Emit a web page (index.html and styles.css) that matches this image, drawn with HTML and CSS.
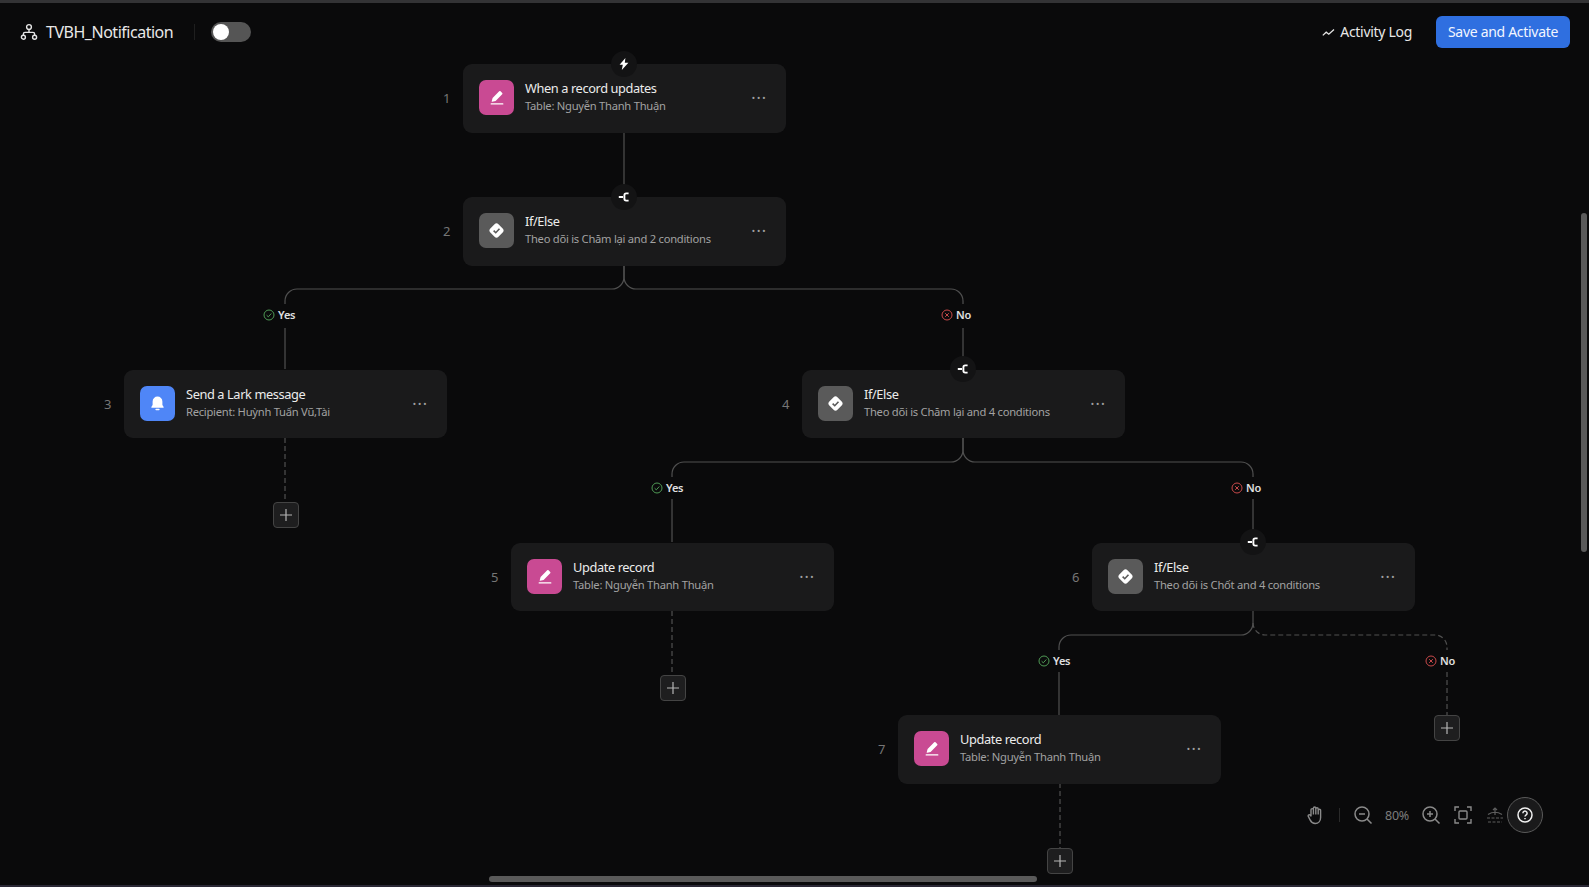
FILE: index.html
```html
<!DOCTYPE html>
<html lang="en">
<head>
    <meta charset="UTF-8">
    <meta name="viewport" content="width=device-width, initial-scale=1.0">
    <title>TVBH_Notification</title>
    <link rel="stylesheet" href="styles.css">
</head>
<body>
    <!-- Icon sprite -->
    <svg class="sprite" width="0" height="0">
        <symbol id="i-pen" viewBox="0 0 16 16">
            <path d="M10.2 1.9a1 1 0 0 1 1.4 0l1.6 1.6a1 1 0 0 1 0 1.4l-6.6 6.6-3.4.9a.4.4 0 0 1-.5-.5l.9-3.4z" fill="#fff" transform="translate(0 -.6)"/>
            <rect x="1.6" y="13.2" width="12.8" height="1.3" rx=".6" fill="#fff"/>
        </symbol>
        <symbol id="i-check" viewBox="0 0 16 16">
            <rect x="2.6" y="2.6" width="10.8" height="10.8" rx="2.6" fill="#fff" transform="rotate(45 8 8)"/>
            <path d="M5.3 8.1l2 2 3.5-3.7" fill="none" stroke="#5a5a5a" stroke-width="1.5"/>
        </symbol>
        <symbol id="i-bell" viewBox="0 0 16 16">
            <path d="M8 1.5a4.6 4.6 0 0 0-4.6 4.6v3.2L2.2 11.4a.5.5 0 0 0 .4.7h10.8a.5.5 0 0 0 .4-.7l-1.2-2.1V6.1A4.6 4.6 0 0 0 8 1.5z" fill="#fff"/>
            <rect x="6" y="13" width="4" height="1.4" rx=".7" fill="#fff"/>
        </symbol>
        <symbol id="i-bolt" viewBox="0 0 12 12">
            <path d="M7.4 0L1.6 6.8h3.2L3.8 12 10.4 4.8H6.800z" fill="#fff"/>
        </symbol>
        <symbol id="i-branch" viewBox="0 0 12 12">
            <path d="M.8 6H5M10.6 2.4H8.2Q6.4 2.4 6.4 4.2V7.8Q6.4 9.6 8.2 9.6H10.6" fill="none" stroke="#fff" stroke-width="1.9"/>
        </symbol>
        <symbol id="i-yes" viewBox="0 0 12 12">
            <circle cx="6" cy="6" r="5" fill="none" stroke="#4f9a55" stroke-width="1"/>
            <path d="M3.6 6.2l1.7 1.6 3-3.3" fill="none" stroke="#4f9a55" stroke-width="1"/>
        </symbol>
        <symbol id="i-no" viewBox="0 0 12 12">
            <circle cx="6" cy="6" r="5" fill="none" stroke="#c8494a" stroke-width="1"/>
            <path d="M4.2 4.2l3.6 3.6M7.8 4.2l-3.6 3.6" fill="none" stroke="#c8494a" stroke-width="1"/>
        </symbol>
        <symbol id="i-plus" viewBox="0 0 14 14">
            <path d="M7 1v12M1 7h12" fill="none" stroke="#b5b5b5" stroke-width="1.2"/>
        </symbol>
    </svg>

    <!-- Header -->
    <header class="topbar">
        <div class="flow-info">
            <svg class="flow-icon" width="18" height="18" viewBox="0 0 18 18" fill="none" stroke="#e6e6e6" stroke-width="1.4">
                <circle cx="9" cy="4" r="2.4"/>
                <circle cx="3.4" cy="14.2" r="2"/>
                <circle cx="14.6" cy="14.2" r="2"/>
                <path d="M3.4 12.2V11a1.6 1.6 0 0 1 1.6-1.6h8a1.6 1.6 0 0 1 1.6 1.6v1.2M9 6.4v3"/>
            </svg>
            <span class="flow-name">TVBH_Notification</span>
            <span class="divider"></span>
            <span class="toggle"><span class="toggle-knob"></span></span>
        </div>
        <div class="top-actions">
            <span class="activity">
                <svg width="13" height="13" viewBox="0 0 13 13" fill="none" stroke="#e6e6e6" stroke-width="1.3">
                    <path d="M.8 9.4l3.4-3.2 2.6 2 5.2-4.6"/>
                </svg>
                Activity Log
            </span>
            <button class="save-btn">Save and Activate</button>
        </div>
    </header>

    <!-- Flow canvas -->
    <main class="canvas">
        <svg class="wires" width="1589" height="887" fill="none" stroke="#505050" stroke-width="1.2">
            <path d="M624 133V197"/>
            <path d="M624 265V277a12 12 0 0 1-12 12H297a12 12 0 0 0-12 12v3"/>
            <path d="M624 265V277a12 12 0 0 0 12 12H951a12 12 0 0 1 12 12v3"/>
            <path d="M285 328V369M963 328V369"/>
            <path d="M963 438V450a12 12 0 0 1-12 12H684a12 12 0 0 0-12 12v3"/>
            <path d="M963 438V450a12 12 0 0 0 12 12H1241a12 12 0 0 1 12 12v3"/>
            <path d="M672 499V542M1253 499V543"/>
            <path d="M1253 611V623a12 12 0 0 1-12 12H1071a12 12 0 0 0-12 12v3"/>
            <path d="M1059 672V715"/>
            <g stroke-dasharray="5 3">
                <path d="M1253 623a12 12 0 0 0 12 12H1435a12 12 0 0 1 12 12v3"/>
                <path d="M1447 672V715M285 438V502M672 611V675M1060 783V848"/>
            </g>
        </svg>

        <div class="node node-1">
            <span class="step">1</span>
            <span class="node-icon pink"><svg width="16" height="16"><use href="#i-pen"/></svg></span>
            <div class="node-text">
                <div class="node-title">When a record updates</div>
                <div class="node-sub">Table: Nguyễn Thanh Thuận</div>
            </div>
            <span class="more">···</span>
            <span class="port"><svg width="12" height="12"><use href="#i-bolt"/></svg></span>
        </div>

        <div class="node node-2">
            <span class="step">2</span>
            <span class="node-icon gray"><svg width="17" height="17"><use href="#i-check"/></svg></span>
            <div class="node-text">
                <div class="node-title">If/Else</div>
                <div class="node-sub">Theo dõi is Chăm lại and 2 conditions</div>
            </div>
            <span class="more">···</span>
            <span class="port"><svg width="12" height="12"><use href="#i-branch"/></svg></span>
        </div>

        <div class="node node-3">
            <span class="step">3</span>
            <span class="node-icon blue"><svg width="17" height="17"><use href="#i-bell"/></svg></span>
            <div class="node-text">
                <div class="node-title">Send a Lark message</div>
                <div class="node-sub">Recipient: Huỳnh Tuấn Vũ,Tài</div>
            </div>
            <span class="more">···</span>
        </div>

        <div class="node node-4">
            <span class="step">4</span>
            <span class="node-icon gray"><svg width="17" height="17"><use href="#i-check"/></svg></span>
            <div class="node-text">
                <div class="node-title">If/Else</div>
                <div class="node-sub">Theo dõi is Chăm lại and 4 conditions</div>
            </div>
            <span class="more">···</span>
            <span class="port"><svg width="12" height="12"><use href="#i-branch"/></svg></span>
        </div>

        <div class="node node-5">
            <span class="step">5</span>
            <span class="node-icon pink"><svg width="16" height="16"><use href="#i-pen"/></svg></span>
            <div class="node-text">
                <div class="node-title">Update record</div>
                <div class="node-sub">Table: Nguyễn Thanh Thuận</div>
            </div>
            <span class="more">···</span>
        </div>

        <div class="node node-6">
            <span class="step">6</span>
            <span class="node-icon gray"><svg width="17" height="17"><use href="#i-check"/></svg></span>
            <div class="node-text">
                <div class="node-title">If/Else</div>
                <div class="node-sub">Theo dõi is Chốt and 4 conditions</div>
            </div>
            <span class="more">···</span>
            <span class="port"><svg width="12" height="12"><use href="#i-branch"/></svg></span>
        </div>

        <div class="node node-7">
            <span class="step">7</span>
            <span class="node-icon pink"><svg width="16" height="16"><use href="#i-pen"/></svg></span>
            <div class="node-text">
                <div class="node-title">Update record</div>
                <div class="node-sub">Table: Nguyễn Thanh Thuận</div>
            </div>
            <span class="more">···</span>
        </div>

        <!-- Branch labels -->
        <span class="branch yes-1"><svg width="12" height="12"><use href="#i-yes"/></svg>Yes</span>
        <span class="branch no-1"><svg width="12" height="12"><use href="#i-no"/></svg>No</span>
        <span class="branch yes-2"><svg width="12" height="12"><use href="#i-yes"/></svg>Yes</span>
        <span class="branch no-2"><svg width="12" height="12"><use href="#i-no"/></svg>No</span>
        <span class="branch yes-3"><svg width="12" height="12"><use href="#i-yes"/></svg>Yes</span>
        <span class="branch no-3"><svg width="12" height="12"><use href="#i-no"/></svg>No</span>

        <!-- Add buttons -->
        <span class="add add-1"><svg width="14" height="14"><use href="#i-plus"/></svg></span>
        <span class="add add-2"><svg width="14" height="14"><use href="#i-plus"/></svg></span>
        <span class="add add-3"><svg width="14" height="14"><use href="#i-plus"/></svg></span>
        <span class="add add-4"><svg width="14" height="14"><use href="#i-plus"/></svg></span>
    </main>

    <!-- Zoom tools -->
    <div class="tools">
        <svg class="tool" width="20" height="20" viewBox="0 0 20 20" fill="none" stroke="#8a8a8a" stroke-width="1.4" stroke-linejoin="round">
            <path d="M5 11V4.8a1.2 1.2 0 0 1 2.4 0V3.2a1.2 1.2 0 0 1 2.4 0v.8a1.2 1.2 0 0 1 2.4 0v1.400a1.2 1.2 0 0 1 2.4 0V12.500c0 3.600-2.200 6-5.400 6-2.600 0-3.900-1.300-5-3.400L2.300 11.400c-.8-1.500 1.400-2.400 2.700-.4zM7.400 4.500v5M9.800 4v5.500M12.200 5v4.500"/>
        </svg>
        <span class="tool-sep"></span>
        <svg class="tool" width="20" height="20" viewBox="0 0 20 20" fill="none" stroke="#8a8a8a" stroke-width="1.5">
            <circle cx="9" cy="9" r="7"/><path d="M14 14l4.500 4.500M6 9h6"/>
        </svg>
        <span class="zoom-value">80%</span>
        <svg class="tool" width="20" height="20" viewBox="0 0 20 20" fill="none" stroke="#8a8a8a" stroke-width="1.5">
            <circle cx="9" cy="9" r="7"/><path d="M14 14l4.500 4.500M6 9h6M9 6v6"/>
        </svg>
        <svg class="tool" width="18" height="18" viewBox="0 0 18 18" fill="none" stroke="#8a8a8a" stroke-width="1.4">
            <path d="M1 5V1h4M13 1h4v4M17 13v4h-4M5 17H1v-4"/><rect x="5" y="5" width="8" height="8" rx="1"/>
        </svg>
        <svg class="tool" width="18" height="18" viewBox="0 0 18 18" fill="none" stroke="#5e5e5e" stroke-width="1.2">
            <path d="M1 12h16M2 16h14" stroke-dasharray="3 1.5"/>
            <path d="M2 8.500Q9 4 16 8.500M9 2v7M7 4l2-2 2 2"/>
        </svg>
        <span class="help">
            <svg width="16" height="16" viewBox="0 0 16 16" fill="none" stroke="#f0f0f0" stroke-width="1.5">
                <circle cx="8" cy="8" r="7"/>
                <path d="M5.900 6.200a2.100 2.100 0 1 1 3.300 1.700c-.8.600-1.200.900-1.200 1.700"/>
                <path d="M8 11v1.300"/>
            </svg>
        </span>
    </div>

    <!-- Scrollbars -->
    <span class="scroll-v"></span>
    <span class="scroll-h"></span>
</body>
</html>
```

FILE: styles.css
```css
/* Global Styles */
* {
    box-sizing: border-box;
}

html, body {
    height: 100%;
}

body {
    margin: 0;
    position: relative;
    overflow: hidden;
    background: #0a0a0b;
    border-top: 3px solid #333335;
    border-bottom: 2px solid #2a2835;
    color: #e8e8e8;
    font-family: "Noto Sans", "Open Sans", sans-serif;
}

.sprite {
    position: absolute;
}

/* Header */
.topbar {
    display: flex;
    justify-content: space-between;
    align-items: center;
    height: 32px;
    margin-top: 13px;
    padding: 0 19px 0 20px;
}

.flow-info {
    display: flex;
    align-items: center;
}

.flow-icon {
    margin-right: 8px;
}

.flow-name {
    padding-bottom: 1px;
    font-size: 16px;
    letter-spacing: -0.48px;
}

.divider {
    width: 1px;
    height: 16px;
    margin: 0 16px 0 21px;
    background: #1f1f1f;
}

.toggle {
    display: block;
    width: 40px;
    height: 20px;
    padding: 2px;
    border-radius: 10px;
    background: #555;
}

.toggle-knob {
    display: block;
    width: 16px;
    height: 16px;
    border-radius: 50%;
    background: #fff;
}

.top-actions {
    display: flex;
    align-items: center;
    gap: 24px;
}

.activity {
    display: flex;
    align-items: center;
    gap: 5px;
    padding-bottom: 2px;
    font-size: 14px;
    letter-spacing: -0.3px;
}

.activity svg {
    margin-top: 2px;
}

.save-btn {
    width: 134px;
    height: 32px;
    padding: 0 0 2px;
    border: none;
    border-radius: 6px;
    background: #2f6fe0;
    color: #f2f6ff;
    font-family: inherit;
    font-size: 14px;
    letter-spacing: -0.3px;
}

/* Flow canvas */
.canvas {
    position: absolute;
    left: 0;
    top: -3px;
    width: 1589px;
    height: 887px;
}

.wires {
    position: absolute;
    left: 0;
    top: 0;
}

.node {
    position: absolute;
    display: flex;
    align-items: center;
    gap: 11px;
    width: 323px;
    height: 69px;
    padding: 0 16px 2px;
    border-radius: 9px;
    background: #1a1a1b;
}

.node-1 { left: 463px; top: 64px; }
.node-2 { left: 463px; top: 197px; }
.node-3 { left: 124px; top: 370px; }
.node-4 { left: 802px; top: 370px; }
.node-5 { left: 511px; top: 543px; }
.node-6 { left: 1092px; top: 543px; }
.node-7 { left: 898px; top: 715px; }

.node-3, .node-4, .node-5, .node-6 {
    height: 68px;
    padding-bottom: 1px;
}

.step {
    position: absolute;
    left: -20px;
    top: 25px;
    font-size: 13px;
    line-height: 18px;
    color: #767676;
}

.node-icon {
    display: flex;
    align-items: center;
    justify-content: center;
    flex: none;
    width: 35px;
    height: 35px;
    border-radius: 7px;
}

.pink { background: #c94a93; }
.gray { background: #5a5a5a; }
.blue { background: #4f86f7; }

.node-text {
    flex: 1;
    min-width: 0;
    padding-bottom: 2px;
}

.node-title {
    font-size: 12.8px;
    line-height: 18px;
    letter-spacing: -0.4px;
    color: #ececec;
}

.node-sub {
    font-size: 11.2px;
    line-height: 17px;
    letter-spacing: -0.26px;
    color: #a2a2a2;
}

.more {
    margin-right: 3px;
    font-size: 16px;
    line-height: 16px;
    letter-spacing: 1px;
    color: #a0a0a0;
}

.port {
    position: absolute;
    left: 148px;
    top: -13px;
    display: flex;
    align-items: center;
    justify-content: center;
    width: 26px;
    height: 26px;
    border-radius: 50%;
    background: #131314;
}

.node-4 .port, .node-6 .port {
    top: -14px;
}

/* Branch labels */
.branch {
    position: absolute;
    display: flex;
    align-items: center;
    gap: 3px;
    height: 16px;
    font-size: 11px;
    font-weight: 600;
    letter-spacing: -0.2px;
    color: #e0e0e0;
}

.branch svg {
    margin-top: 1px;
}

.yes-1 { left: 263px; top: 306px; }
.no-1 { left: 941px; top: 306px; }
.yes-2 { left: 651px; top: 479px; }
.no-2 { left: 1231px; top: 479px; }
.yes-3 { left: 1038px; top: 652px; }
.no-3 { left: 1425px; top: 652px; }

/* Add buttons */
.add {
    position: absolute;
    display: flex;
    align-items: center;
    justify-content: center;
    width: 26px;
    height: 26px;
    border: 1px solid #444;
    border-radius: 4px;
    background: #1e1e1f;
}

.add-1 { left: 273px; top: 502px; }
.add-2 { left: 660px; top: 675px; }
.add-3 { left: 1434px; top: 715px; }
.add-4 { left: 1047px; top: 848px; }

/* Zoom tools */
.tools {
    position: absolute;
    right: 46px;
    top: 794px;
    display: flex;
    align-items: center;
    height: 36px;
}

.tool {
    flex: none;
}

.tool-sep {
    width: 1px;
    height: 14px;
    margin: 0 13px;
    background: #2a2a2a;
}

.zoom-value {
    width: 48px;
    text-align: center;
    font-size: 12.5px;
    letter-spacing: -0.2px;
    color: #7c7c7c;
}

.tools .tool:nth-of-type(4) { margin-left: 13px; }
.tools .tool:nth-of-type(5) { margin-left: 14px; }

.help {
    display: flex;
    align-items: center;
    justify-content: center;
    width: 36px;
    height: 36px;
    margin-left: 3px;
    border: 1px solid #5a5a5a;
    border-radius: 50%;
    background: #1a1a1b;
}

/* Scrollbars */
.scroll-v {
    position: absolute;
    left: 1581px;
    top: 210px;
    width: 6px;
    height: 339px;
    border-radius: 3px;
    background: #5a5a5a;
}

.scroll-h {
    position: absolute;
    left: 489px;
    top: 873px;
    width: 548px;
    height: 6px;
    border-radius: 3px;
    background: #5a5a5a;
}
```
